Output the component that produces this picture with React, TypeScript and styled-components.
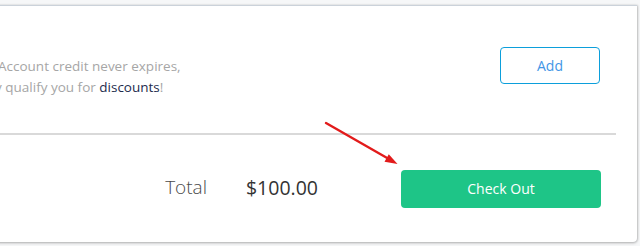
import React from "react";
import styled, { createGlobalStyle } from "styled-components";

const Global = createGlobalStyle`
  html, body { margin: 0; padding: 0; }
  body {
    background: #f6f7f8;
    font-family: "Open Sans", "Liberation Sans", sans-serif;
  }
`;

const Page = styled.div`
  position: relative;
  width: 640px;
  height: 246px;
  overflow: hidden;
  display: flex;
  justify-content: flex-end;
  align-items: flex-start;
  padding: 5px 3px 0 0;
  box-sizing: border-box;
`;

const Card = styled.div`
  flex-shrink: 0;
  width: 900px;
  height: 237px;
  box-sizing: border-box;
  background: #fff;
  border-top: 1px solid #cbd2da;
  border-radius: 0 0 4px 4px;
  box-shadow: 0 1px 3px rgba(0, 0, 0, 0.28), 1px 0 2px rgba(0, 0, 0, 0.12);
  display: flex;
  flex-direction: column;
`;

const CreditRow = styled.div`
  height: 127px;
  display: grid;
  grid-template-columns: 1fr 100px;
  align-items: start;
  padding: 0 37px 0 261px;
  box-sizing: border-box;
`;

const Description = styled.p`
  margin: 0;
  padding-top: 50px;
  font-size: 13.5px;
  line-height: 21px;
  color: #a6a6a6;
  white-space: nowrap;
`;

const Line = styled.span<{ $indent: number }>`
  display: block;
  text-indent: ${(p) => p.$indent}px;
`;

const Strong = styled.span`
  color: #1d2b4c;
`;

const OutlineButton = styled.button`
  margin-top: 41px;
  width: 100px;
  height: 37px;
  border: 1px solid #0c9fdb;
  border-radius: 4px;
  background: #fff;
  color: #4396e6;
  font-family: inherit;
  font-size: 14px;
  padding: 0;
`;

const Divider = styled.hr`
  margin: 0 21px 0 0;
  border: 0;
  height: 2px;
  background: #d9d9d9;
`;

const TotalRow = styled.div`
  flex: 1;
  display: flex;
  align-items: center;
  justify-content: flex-end;
  padding: 0 36px 0 0;
`;

const TotalLabel = styled.span`
  font-size: 19px;
  font-weight: 300;
  color: #4a4a4a;
  margin-right: 39px;
  margin-top: -3px;
`;

const Amount = styled.span`
  font-size: 19.5px;
  color: #333;
  margin-right: 83px;
  margin-top: -3px;
`;

const PrimaryButton = styled.button`
  width: 200px;
  height: 38px;
  border: 0;
  border-radius: 4px;
  background: #1ec587;
  color: #fff;
  font-family: inherit;
  font-size: 14px;
  font-weight: 500;
  padding: 0;
`;

const Annotation = styled.svg`
  position: absolute;
  left: 0;
  top: 0;
  pointer-events: none;
`;

export default function App() {
  return (
    <>
      <Global />
      <Page>
        <Card>
          <CreditRow>
            <Description>
              <Line $indent={0}>Account credit never expires,</Line>
              <Line $indent={-3}>
                y qualify you for <Strong>discounts</Strong>!
              </Line>
            </Description>
            <OutlineButton>Add</OutlineButton>
          </CreditRow>
          <Divider />
          <TotalRow>
            <TotalLabel>Total</TotalLabel>
            <Amount>$100.00</Amount>
            <PrimaryButton>Check Out</PrimaryButton>
          </TotalRow>
        </Card>
        <Annotation width="640" height="246" viewBox="0 0 640 246">
          <line x1="326" y1="123" x2="388" y2="158.5" stroke="#e21b1b" strokeWidth="2.4" strokeLinecap="round" />
          <polygon points="397.5,164 384.5,161.8 388.8,154.2" fill="#e21b1b" />
        </Annotation>
      </Page>
    </>
  );
}
